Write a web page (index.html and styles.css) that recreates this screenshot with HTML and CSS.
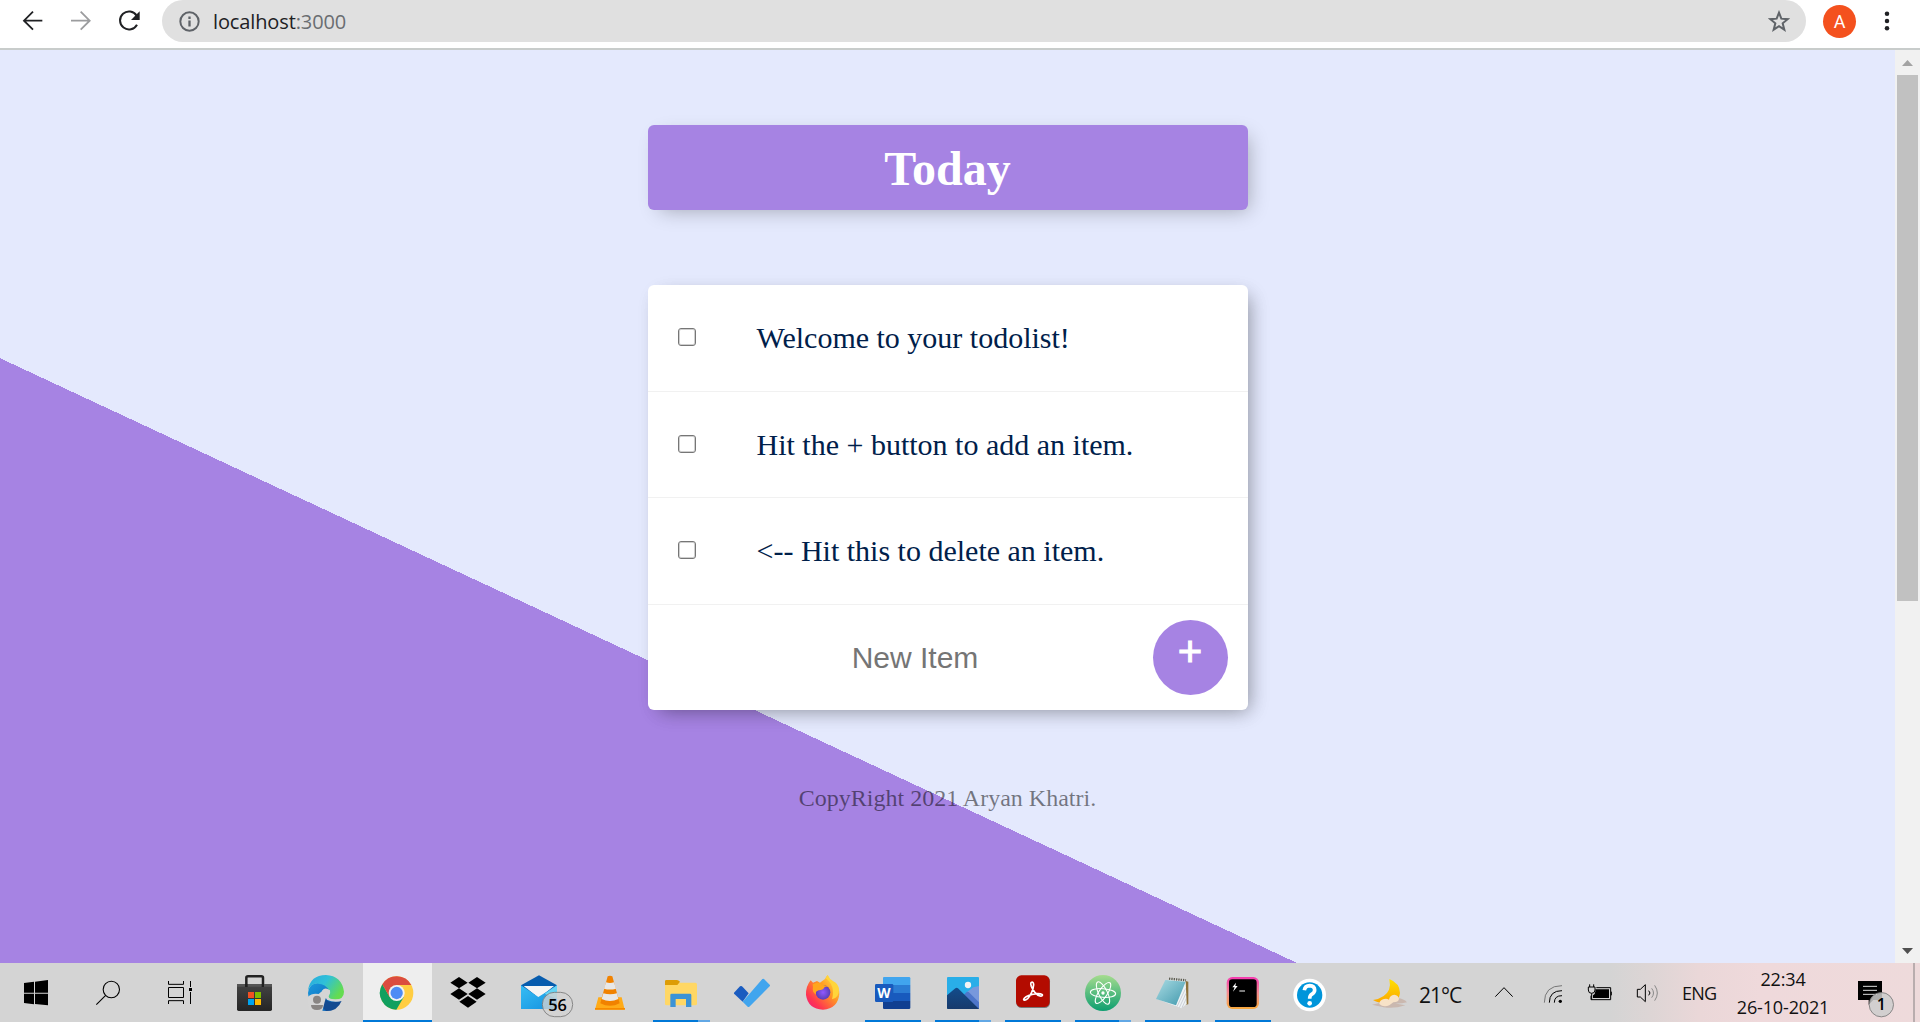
FILE: index.html
```html
<!DOCTYPE html>
<html lang="en">
<head>
<meta charset="utf-8">
<title>To Do List</title>
<link rel="stylesheet" href="styles.css">
</head>
<body>
<header class="toolbar">
  <svg class="nav" viewBox="1 0 486 144">
    <g fill="none" stroke-width="5.5">
      <path stroke="#202124" d="M128 62H73M100 35L73 62l27 27"/>
      <path stroke="#9b9c9e" d="M214 62h55M243 35l27 27-27 27"/>
      <path stroke="#202124" stroke-width="6" d="M411 47A27 27 0 1 0 412 74"/>
    </g>
    <path fill="#202124" d="M420 34v26h-26z"/>
  </svg>
  <div class="address">
    <svg class="info" viewBox="0 0 64 64"><circle cx="32" cy="32" r="28" fill="none" stroke="#5f6368" stroke-width="6"/><path fill="#5f6368" d="M28.500 29h7v18h-7zM28.500 17h7v7h-7z"/></svg>
    <span class="url">localhost<span class="port">:3000</span></span>
    <svg class="star" viewBox="0 0 66 66"><path fill="none" stroke="#5f6368" stroke-width="6" d="M33 8l7 18 19 1.500-15 12.500 5 19-16-10.500-16 10.500 5-19L7 27.500 26 26z"/></svg>
  </div>
  <span class="avatar">A</span>
  <svg class="dots" viewBox="0 0 18 66"><g fill="#202124"><circle cx="9" cy="11" r="6.800"/><circle cx="9" cy="33" r="6.800"/><circle cx="9" cy="55" r="6.800"/></g></svg>
</header>

<div class="window">
  <main class="page">
    <h1 class="box heading">Today</h1>
    <div class="box list">
      <div class="item"><input class="check" type="checkbox"><p class="label">Welcome to your todolist!</p></div>
      <div class="item"><input class="check" type="checkbox"><p class="label">Hit the + button to add an item.</p></div>
      <div class="item"><input class="check" type="checkbox"><p class="label">&lt;-- Hit this to delete an item.</p></div>
      <form class="item new"><input class="entry" type="text" placeholder="New Item"><button class="add" type="button">+</button></form>
    </div>
    <footer class="footer">CopyRight 2021 Aryan Khatri.</footer>
  </main>
  <div class="scrollbar">
    <svg class="arrow" viewBox="0 0 25 25"><path fill="#a3a3a3" d="M7 16h11l-5.500-6z"/></svg>
    <div class="thumb"></div>
    <svg class="arrow" viewBox="0 0 25 25"><path fill="#505050" d="M7 10h11l-5.500 6z"/></svg>
  </div>
</div>

<nav class="taskbar">
  <svg class="cell w72" viewBox="0 39 216 177"><path d="M72 98l30-4v33H72zM105 94l39-5v0 38h-39zM72 130h30v32l-30-4zM105 130h39v35l-39-4z" transform="translate(0 1)"/></svg>
  <svg class="cell w72" viewBox="216 39 216 177"><g fill="none" stroke="#000" stroke-width="3.200"><circle cx="334" cy="118.500" r="24.500"/><path d="M317 136l-28 28"/></g></svg>
  <svg class="cell w75" viewBox="432 39 225 177"><path fill="none" stroke="#000" stroke-width="3" d="M505.500 93v10h45V93M505.500 112.500h45v30h-45zM505.500 162v-10h45v10M571.500 93v18M571.500 126v36"/><path d="M567 114h9v9h-9z"/></svg>
  <svg class="cell w71" viewBox="657 39 213 177">
    <defs><linearGradient id="bag" x1="0" y1="0" x2="0" y2="1"><stop offset="0" stop-color="#444"/><stop offset="1" stop-color="#252525"/></linearGradient></defs>
    <path fill="none" stroke="#222" stroke-width="7.500" d="M739 112V83q0-4 5-4h40q5 0 5 4v29"/>
    <path fill="url(#bag)" d="M711 102h105v76q0 5-5 5h-95q-5 0-5-5z"/><path fill="#555" d="M711 102h105v8H711z"/><path fill="#222" d="M735 102h8v9h-8zM785 102h7v9h-7z"/>
    <path fill="#f25022" d="M744 126h18v18h-18z"/><path fill="#7fba00" d="M765 126h18v18h-18z"/><path fill="#00a4ef" d="M744 147h18v18h-18z"/><path fill="#ffb900" d="M765 147h18v18h-18z"/>
  </svg>
  <svg class="cell w71" viewBox="870 39 213 177">
    <defs><linearGradient id="edgeTop" x1="0" y1="0" x2="1" y2=".5"><stop offset="0" stop-color="#2aa9de"/><stop offset=".5" stop-color="#2fc0d8"/><stop offset="1" stop-color="#64dc50"/></linearGradient>
    <linearGradient id="edgeLow" x1="0" y1="0" x2="1" y2="1"><stop offset="0" stop-color="#1b9ade"/><stop offset="1" stop-color="#0a5bb0"/></linearGradient></defs>
    <path fill="url(#edgeLow)" d="M924 129q4-32 32-30 30 2 36 20l-12 30 40 6q-14 28-42 28-50 0-54-54z"/>
    <path fill="#124a91" d="M975 134q-2 20 22 22 14 1 28-4-12 31-46 31-22-14-4-49z"/>
    <path fill="url(#edgeTop)" d="M924 121q7-46 54-46 47 2 54 50 0 23-26 23-24 0-23-10 8-7 4-17-10-19-33-20-20-2-30 20z"/>
    <path fill="#d5d5d5" d="M966 122q9-12 24-1 3 8-4 18 1 11 20 12 18-1 27-10l-8 12q-26 5-42-3-11-9-17-28z"/>
    <path fill="#d5d5d5" d="M924 140q12-12 32-8l14-12 10 16-6 20-7 27h-38l-5-20z"/>
    <circle cx="951" cy="149" r="12" fill="#898583"/><path fill="#898583" d="M933 165h36q0 15-18 15t-18-15z"/>
  </svg>
  <svg class="cell w71" viewBox="33 39 213 177">
    <path fill="#eee" d="M39 39h207v177H39z"/><path fill="#0078d7" d="M39 210h207v6H39z"/>
    <circle cx="140" cy="129" r="50" fill="#ffcd42"/>
    <path fill="#db4c3f" d="M97 103a50 50 0 0 1 87 2h-44l-22 13z"/>
    <path fill="#11a05f" d="M97 103a50 50 0 0 0 42 76l22-37-42-1z"/>
    <path fill="#db4c3f" d="M97 103l22 38 10-30 10-6z"/>
    <circle cx="140" cy="129" r="24" fill="#f1f1f1"/><circle cx="140" cy="129" r="18.500" fill="#4c8bf5"/>
  </svg>
  <svg class="cell w71" viewBox="246 39 213 177"><path d="M301 98l26-17 26 17-26 17zM355 98l26-17 26 17-26 17zM301 132l26-17 26 17-26 17zM355 132l26-17 26 17-26 17zM328 155l26-17 26 17-26 18z"/></svg>
  <svg class="cell w71" viewBox="459 39 213 177">
    <defs><linearGradient id="mail" x1="0" y1="0" x2="1" y2="1"><stop offset="0" stop-color="#36bdf4"/><stop offset="1" stop-color="#1490df"/></linearGradient></defs>
    <path fill="#075cae" d="M513 106l54-30 54 30v30H513z"/><path fill="#f5f5f5" d="M521 108h91l-45 36z"/>
    <path fill="url(#mail)" d="M513 106l52 35 56-35v71H513z"/><path fill="#65d4f4" d="M621 106v40l-37-15z"/>
    <rect x="577" y="127" width="91" height="73" rx="36" fill="#d2d2d2" fill-opacity=".8" stroke="#777" stroke-width="2.500"/>
    <text class="count" x="622.500" y="182" text-anchor="middle" textLength="56" lengthAdjust="spacingAndGlyphs">56</text>
  </svg>
  <svg class="cell w71" viewBox="672 39 213 177">
    <path fill="#ffab18" d="M745 142h70l9 37h-89z"/><path fill="#f68a00" d="M735 174h90v5h-90z"/>
    <path fill="#f18200" d="M773 79q7-3 14 0l22 81q-29 15-58 0z"/>
    <path fill="#e8e8e8" d="M768 97q12 4 24 0l6 19q-18 5-36 0zM760 130q20 6 41 0l4 17q-25 12-50 0z"/>
  </svg>
  <svg class="cell w71" viewBox="885 39 213 177">
    <path fill="#ffd765" d="M945 98h91q5 0 5 5v58q0 5-5 5h-86q-5 0-5-5z"/><path fill="#dd9c05" d="M945 94q0-4 4-4h32q4 0 9 5l-8 10h-37z"/>
    <path fill="#3c93d6" d="M961 171v-36q0-4 4-4h55q4 0 4 4v36h-16v-24h-31v24z"/>
    <path fill="#0078d7" d="M909 210h135v6H909z"/><path fill="#62a8e5" d="M1044 210h36v6h-36z"/>
  </svg>
  <svg class="cell w71" viewBox="48 39 213 177"><path fill="#1a5cc0" d="M102 128l18-19q3-2 6 0l20 21-18 25-25-23q-2-2-1-4z"/><path fill="#41a5ee" d="M128 155l59-68q3-2 5 0l17 17q2 2 0 5l-61 61q-3 2-5 0z"/></svg>
  <svg class="cell w71" viewBox="261 39 213 177">
    <defs><linearGradient id="fox" x1="1" y1="0" x2="0" y2="1"><stop offset="0" stop-color="#fff44f"/><stop offset=".4" stop-color="#ff9a24"/><stop offset=".75" stop-color="#ff3750"/><stop offset="1" stop-color="#ed1680"/></linearGradient>
    <radialGradient id="globe"><stop offset="0" stop-color="#9059ff"/><stop offset="1" stop-color="#5b3fb5"/></radialGradient></defs>
    <path fill="url(#fox)" d="M332 91l7 7 12-5 9 5q10-7 15-11 3-8 8-12 5 18 21 24 14 12 14 33-4 44-49 47-45-2-51-44-1-26 14-44z"/>
    <circle cx="369" cy="127" r="22" fill="url(#globe)"/>
    <path fill="#ffa51e" d="M338 103q16-10 29 1 10 2 17 5l-10 2q-5 10-18 10-11 3-8 13-13-8-9-22z"/>
    <path fill="#ffd53a" d="M377 85q30 21 19 63 21-3 21-30-3-18-17-24-12-7-17-19z"/>
  </svg>
  <svg class="cell w70" viewBox="474 39 210 177">
    <path fill="#41a5ee" d="M552 81h75q4 0 4 4v20h-82V84q0-3 3-3z"/><path fill="#2b7cd3" d="M549 105h82v24h-82z"/><path fill="#185abd" d="M549 129h82v24h-82z"/><path fill="#103f91" d="M549 153h82v20q0 4-4 4h-75q-3 0-3-4z"/>
    <rect x="525" y="102" width="55" height="54" rx="4" fill="#185abd"/><text class="word" x="552" y="145" text-anchor="middle" textLength="40" lengthAdjust="spacingAndGlyphs">W</text>
    <path fill="#0078d7" d="M495 210h168v6H495z"/>
  </svg>
  <svg class="cell w70" viewBox="684 39 210 177">
    <defs><linearGradient id="hill" x1="0" y1="0" x2="0" y2="1"><stop offset="0" stop-color="#134c8b"/><stop offset="1" stop-color="#173a6c"/></linearGradient></defs>
    <rect x="741" y="81" width="96" height="96" rx="3" fill="#29aee8"/><path fill="#7898dc" d="M800 127l20-15 17-4v60z"/><path fill="#4e76ca" d="M784 142l16-16q3-2 6 0l31 31v20h-40z"/>
    <path fill="url(#hill)" d="M741 136l25-21q4-3 8 0l63 62h-93q-3 0-3-3z"/><circle cx="804" cy="105" r="9.500" fill="#f4f4f4"/>
    <path fill="#0078d7" d="M705 210h132v6H705z"/><path fill="#62a8e5" d="M837 210h36v6h-36z"/>
  </svg>
  <svg class="cell w70" viewBox="894 39 210 177">
    <rect x="949" y="78" width="101" height="96" rx="16" fill="#777"/><rect x="948" y="76" width="101" height="95" rx="16" fill="#b30b00"/>
    <path fill="none" stroke="#fff" stroke-width="5" d="M993 98q7-5 8 6-2 23-18 42-11 8-12 2 3-9 25-15 23-5 31 1 2 5-7 4-16-5-26-29-3-8-1-11z"/>
    <path fill="#0078d7" d="M915 210h168v6H915z"/>
  </svg>
  <svg class="cell w70" viewBox="54 39 210 177">
    <defs><linearGradient id="atom" x1="0" y1="0" x2="0" y2="1"><stop offset="0" stop-color="#a5dc8e"/><stop offset="1" stop-color="#0d9e70"/></linearGradient></defs>
    <circle cx="159" cy="129" r="54" fill="url(#atom)"/>
    <g fill="none" stroke="#fff" stroke-width="3.200"><ellipse cx="159" cy="129" rx="13" ry="37" transform="rotate(-26 159 129)"/><ellipse cx="159" cy="129" rx="13" ry="37" transform="rotate(34 159 129)"/><ellipse cx="159" cy="129" rx="13" ry="38" transform="rotate(94 159 129)"/></g><circle cx="159" cy="129" r="5" fill="#fff"/>
    <path fill="#0078d7" d="M75 210h132v6H75z"/><path fill="#62a8e5" d="M207 210h36v6h-36z"/>
  </svg>
  <svg class="cell w70" viewBox="264 39 210 177">
    <defs><linearGradient id="pad" x1="0" y1="0" x2="1" y2="1"><stop offset="0" stop-color="#a9dbe3"/><stop offset="1" stop-color="#4199ad"/></linearGradient></defs>
    <path fill="#8d7139" d="M405 92l10 3v68l-17 3z"/><path fill="#eef3f4" d="M357 88l50 4 3 70-16 13-73-28z"/>
    <path fill="none" stroke="#aab" stroke-width="1.500" d="M407 115l-26 55M408 130l-20 43M409 145l-13 28"/>
    <path fill="url(#pad)" d="M346 90l61 5-29 71-60-19z"/><path stroke="#5c5c50" stroke-width="7" stroke-dasharray="4 3" d="M357 86l51 5"/>
    <path fill="#0078d7" d="M285 210h168v6H285z"/>
  </svg>
  <svg class="cell w70" viewBox="474 39 210 177">
    <defs><linearGradient id="glow" x1="0" y1="0" x2="0" y2="1"><stop offset="0" stop-color="#f63ab1"/><stop offset=".5" stop-color="#f58c8f"/><stop offset="1" stop-color="#f7a93c"/></linearGradient></defs>
    <rect x="530" y="81" width="97" height="96" rx="17" fill="url(#glow)"/><rect x="537" y="88" width="83" height="83" rx="10"/>
    <path fill="#fff" d="M558 98l-11 14h7l-5 13 14-17h-7z"/><path fill="#bbb" d="M568 121h17v4h-17z"/>
    <path fill="#0078d7" d="M495 210h168v6H495z"/>
  </svg>
  <svg class="cell w70" viewBox="684 39 210 177"><circle cx="779" cy="135" r="49" fill="#fff"/><circle cx="779" cy="135" r="38" fill="#0095da"/><path fill="none" stroke="#fff" stroke-width="11" d="M763 121q2-14 16-14 15 1 15 13 0 8-9 13-6 4-6 13"/><circle cx="779" cy="160" r="7" fill="#fff"/></svg>
  <svg class="cell w71" viewBox="-6 99 213 177">
    <defs><linearGradient id="moon" x1="0" y1="0" x2="0" y2="1"><stop offset="0" stop-color="#ffe100"/><stop offset="1" stop-color="#fca600"/></linearGradient></defs>
    <path fill="url(#moon)" d="M118 147q32 13 32 42-2 28-38 31-24 1-43-10 38-7 48-31 5-14 1-32z"/>
    <path fill="#cab8af" d="M110 214q10-10 34-9 17 1 27 12-20 5-44 3zM66 224q33-10 61-5l39 7q-34 11-65 6z"/>
    <path fill="#f7e2c7" d="M88 222q0-12 14-15 8-3 15 2 2-14 16-15 12 1 14 13-2 10-17 10l-12 9q-18 7-30-4z"/>
  </svg>
  <span class="temp">21°C</span>
  <svg class="tray" viewBox="414 99 516 177">
    <g fill="none" stroke="#000" stroke-width="3"><path d="M436 200l26-27 26 27"/>
    <path stroke="#777" d="M583 218q0-51 53-51"/><path d="M598 218q0-36 38-36M613 218q0-21 23-21"/>
    <path d="M739 173h43v36h-59v-12M784 185v11M719 163v8M731 163v8M715 171h20v9q0 10-10 10t-10-10zM725 190v18"/>
    <path d="M862 178h9l15-14v51l-15-14h-9z"/><path d="M896 182q8 7 0 14"/><path stroke="#888" d="M905 175q11 14 0 28M914 166q16 23 0 46"/></g><circle cx="631" cy="214" r="5"/><path d="M736 178h41v26h-48v-8q7-4 7-12z"/>
  </svg>
  <span class="lang">ENG</span>
  <div class="clock"><span class="time">22:34</span><span class="date">26-10-2021</span></div>
  <svg class="action" viewBox="630 99 180 177">
    <path d="M654 153h72v57h-26l-14 14v-14h-32z"/><path stroke="#ddd" stroke-width="3" d="M669 169h42M669 181h42M669 193h42"/>
    <circle cx="724" cy="224" r="36.500" fill="#ccc" fill-opacity=".85" stroke="#777" stroke-width="2.500"/><text class="count" x="724" y="241" text-anchor="middle">1</text>
  </svg>
  <div class="edge"></div>
</nav>
</body>
</html>
```
FILE: styles.css
```css
* { box-sizing: border-box; }
body { margin: 0; height: 1022px; overflow: hidden; display: flex; flex-direction: column; background: #e4e9fd; }
svg { display: block; flex: none; }

.toolbar { height: 50px; flex: none; display: flex; align-items: flex-start; background: #fff; border-bottom: 2px solid #c8cccb; font-family: "Open Sans", sans-serif; }
.nav { width: 162px; height: 48px; }
.address { width: 1644px; height: 42px; background: #e0e0e0; border-radius: 21px; display: flex; align-items: center; padding: 0 16px 0 17px; }
.info { width: 21px; height: 21px; }
.url { margin-left: 13px; flex: 1; font-size: 20px; line-height: 42px; padding-top: 1px; letter-spacing: -0.12px; color: #202124; }
.port { color: #6a6d71; }
.star { width: 22px; height: 22px; }
.avatar { width: 33px; height: 33px; margin: 5px 0 0 17px; border-radius: 50%; background: #f4511e; color: #fff; font: 18px/34px Roboto, sans-serif; text-align: center; }
.dots { width: 6px; height: 22px; margin: 10px 0 0 28px; }

.window { height: 913px; flex: none; display: flex; }
.page { flex: 1; display: flex; flex-direction: column; align-items: center; padding-top: 75px; background: linear-gradient(25deg, #a683e3 50%, #e4e9fd 50%) 0 0 / 100% 1500px no-repeat; font-family: "Liberation Serif", serif; }
.box { width: 600px; border-radius: 6px; box-shadow: 6px 6px 19px -6px rgba(0, 0, 0, .3); }
.heading { height: 85px; margin: 0 0 75px; background: #a683e3; color: #fff; font-size: 48px; line-height: 88px; text-align: center; }
.list { height: 425px; background: #fff; display: grid; grid-template-rows: 107px 106px 107px 105px; overflow: hidden; box-shadow: 6px 6px 19px -6px rgba(0, 0, 0, .3), 6px 6px 19px -6px rgba(0, 0, 0, .15); }
.item { display: flex; align-items: center; border-bottom: 1px solid #f1f1f1; }
.check { appearance: none; width: 18px; height: 18px; margin: 0 0 2px 30px; border: 1px solid #767676; border-radius: 3px; background: #fff; box-shadow: inset 0 0 0 1px rgba(118, 118, 118, .35); }
.label { margin: 0 0 0 61px; font-size: 30px; color: #00204a; }
.new { border: 0; }
.entry { width: 505px; height: 75px; padding: 0 0 0 30px; border: 0; background: transparent; text-align: center; font: 30px "Liberation Sans", sans-serif; }
.entry::placeholder { color: #757575; }
.add { width: 75px; height: 75px; padding: 0 0 12px; border: 0; border-radius: 50%; background: #a683e3; color: #fff; font: 42px/60px "Liberation Sans", sans-serif; -webkit-text-stroke: 1px #fff; }
.footer { margin-top: 74px; font-size: 24px; line-height: 28px; color: rgba(0, 0, 0, .5); }

.scrollbar { width: 25px; background: #f1f1f1; display: flex; flex-direction: column; align-items: center; }
.arrow { width: 25px; height: 25px; }
.thumb { width: 21px; height: 526px; margin-bottom: auto; background: #c1c1c1; }

.taskbar { height: 59px; flex: none; display: flex; background: linear-gradient(90deg, #d4d4d4 1610px, #ddd5d5 1650px, #ead7d8 1700px, #efd9db 1760px, #eedadb); font-family: "Open Sans", sans-serif; color: #111; }
.cell { height: 59px; }
.w70 { width: 70px; }
.w71 { width: 71px; }
.w72 { width: 72px; }
.w75 { width: 75px; }
.count { font: 600 48px "Open Sans", sans-serif; }
.word { font: 700 44px "Open Sans", sans-serif; fill: #fff; }
.temp { width: 69px; font-size: 21px; line-height: 65px; letter-spacing: -1px; }
.tray { width: 172px; height: 59px; }
.lang { width: 54px; padding-left: 22px; margin-right: 20px; font-size: 18px; line-height: 61px; letter-spacing: -0.8px; }
.clock { width: 96px; display: flex; flex-direction: column; align-items: center; padding-top: 2px; margin-left: 1px; font-size: 18px; line-height: 28px; letter-spacing: -0.15px; }
.action { width: 60px; height: 59px; margin-left: 19px; }
.edge { width: 2px; height: 59px; margin-left: 3px; background: #b9adae; }
```
